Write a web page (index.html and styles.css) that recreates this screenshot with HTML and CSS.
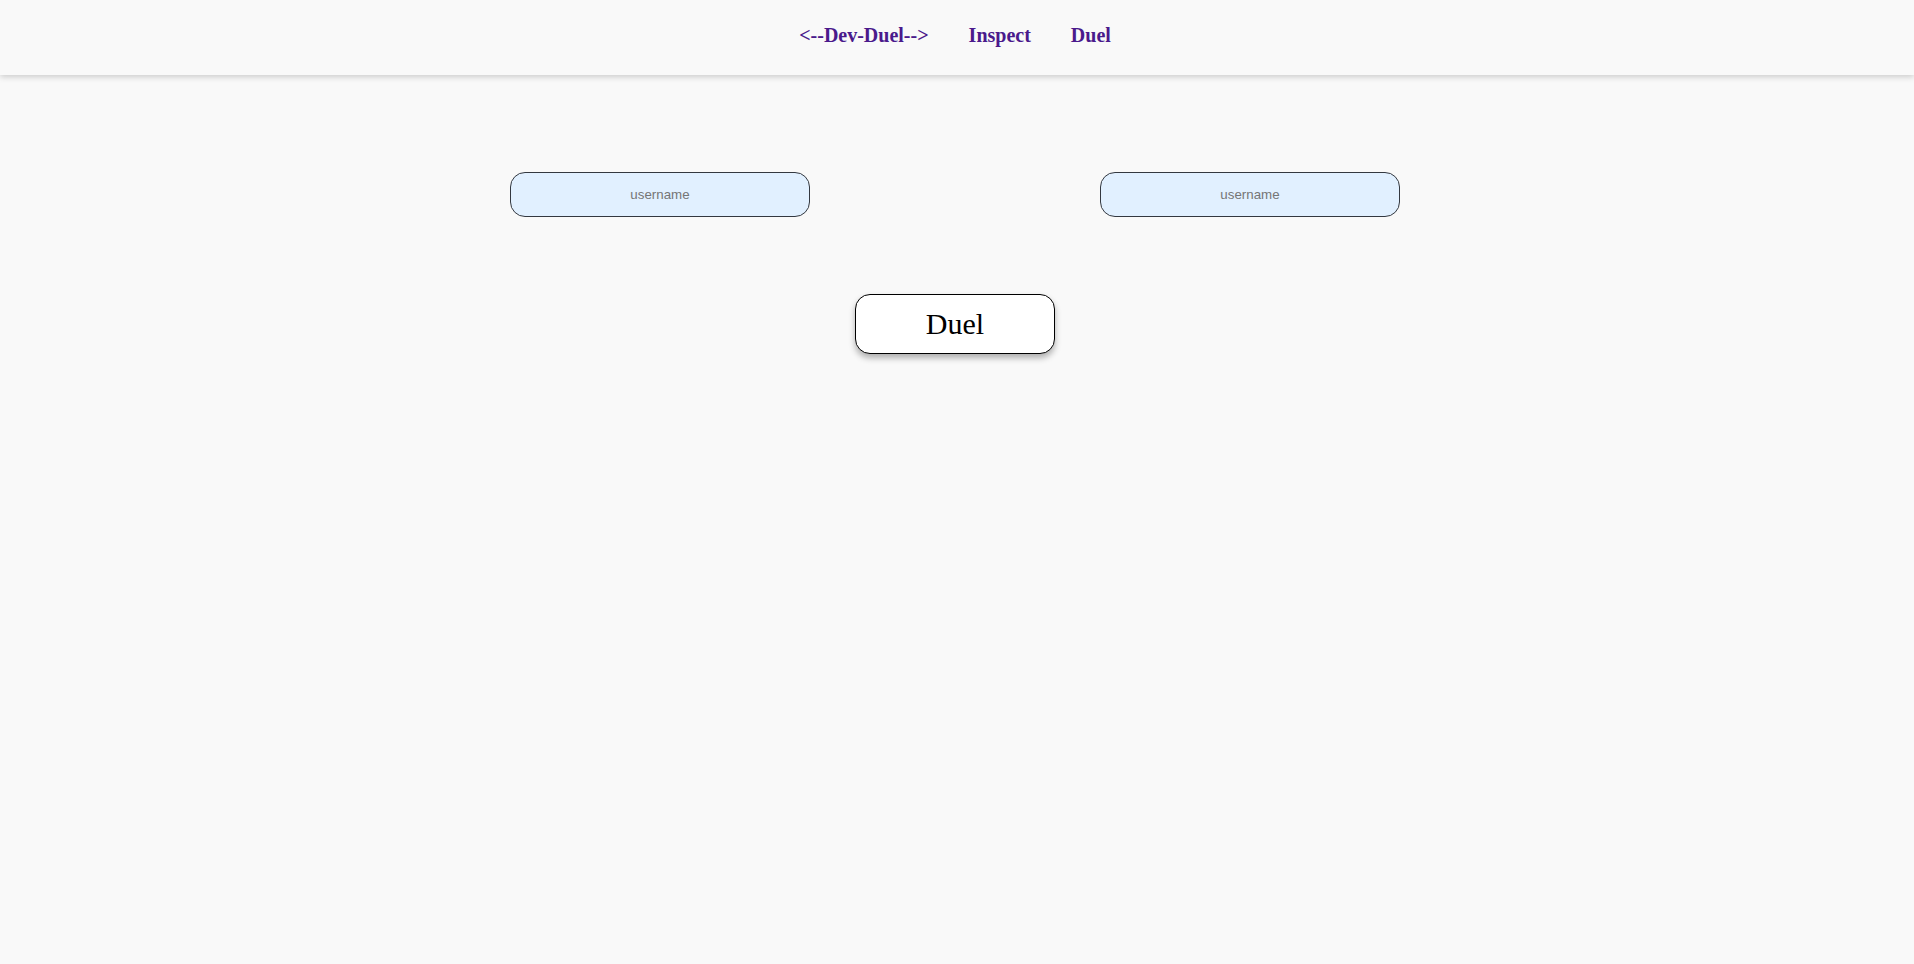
FILE: index.html
```html
<!DOCTYPE html>
<html lang="en">
<head>
<meta charset="utf-8">
<title>Dev Duel</title>
<link rel="stylesheet" href="styles.css">
</head>
<body>
<nav class="nav">
  <a class="nav-link" href="#">&lt;--Dev-Duel--&gt;</a>
  <a class="nav-link" href="#">Inspect</a>
  <a class="nav-link" href="#">Duel</a>
</nav>
<main class="main">
  <div class="inputs">
    <input class="user-input" type="text" placeholder="username">
    <input class="user-input" type="text" placeholder="username">
  </div>
  <button class="duel-btn" type="button">Duel</button>
</main>
</body>
</html>
```

FILE: styles.css
```css
html, body {
  margin: 0;
  padding: 0;
  background: #f9f9f9;
  height: 100%;
}

body {
  font-family: "Liberation Serif", "Times New Roman", serif;
}

.nav {
  height: 75px;
  background: #f9f9f9;
  box-shadow: 0 2px 6px rgba(0, 0, 0, 0.18);
  display: flex;
  align-items: center;
  justify-content: center;
  gap: 40px;
  padding-right: 4px;
  padding-bottom: 4px;
  box-sizing: border-box;
}

.nav-link {
  font-family: "Liberation Serif", "Times New Roman", serif;
  font-weight: bold;
  font-size: 20px;
  color: #4a1a8c;
  text-decoration: none;
}

.main {
  display: flex;
  flex-direction: column;
  align-items: center;
  padding-top: 97px;
  padding-right: 4px;
}

.inputs {
  display: flex;
  gap: 290px;
}

.user-input {
  width: 300px;
  height: 45px;
  box-sizing: border-box;
  border: 1px solid #333840;
  border-radius: 15px;
  background: #e1f0ff;
  text-align: center;
  font-family: "Liberation Sans", Arial, sans-serif;
  font-size: 13.333px;
  color: #333;
  outline: none;
}

.user-input::placeholder {
  color: #757575;
}

.duel-btn {
  margin-top: 77px;
  width: 200px;
  height: 60px;
  box-sizing: border-box;
  background: #ffffff;
  border: 1.5px solid #000;
  border-radius: 15px;
  box-shadow: 0 4px 6px rgba(0, 0, 0, 0.3);
  font-family: "Liberation Serif", "Times New Roman", serif;
  font-size: 30px;
  color: #000;
  cursor: pointer;
  padding: 0;
}
```
